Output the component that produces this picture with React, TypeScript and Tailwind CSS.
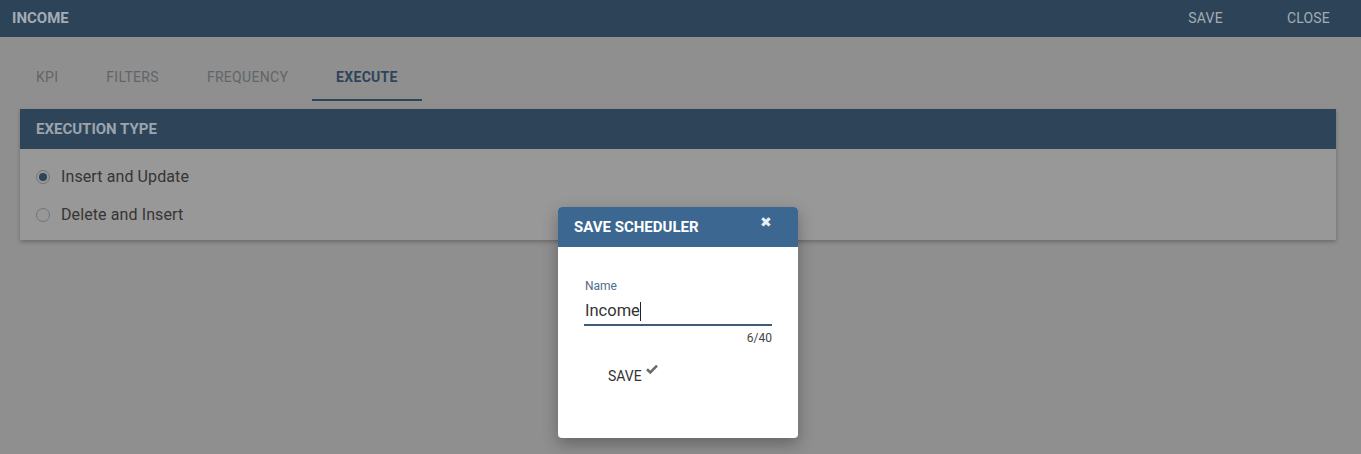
const font = { fontFamily: "Roboto, 'Liberation Sans', sans-serif" };

const tabs = [
  { label: "KPI", active: false },
  { label: "FILTERS", active: false },
  { label: "FREQUENCY", active: false },
  { label: "EXECUTE", active: true },
];

function Radio({ checked, label }: { checked: boolean; label: string }) {
  return (
    <label className="flex items-center h-[38px] gap-[11px]">
      <span className="w-[14px] h-[14px] rounded-full border-[1.5px] border-[#6f757b] flex items-center justify-center">
        {checked && <span className="w-[8px] h-[8px] rounded-full bg-[#2e4459]" />}
      </span>
      <span className="text-[16px] tracking-[0.1px] text-[#353535]">{label}</span>
    </label>
  );
}

export default function App() {
  return (
    <div className="relative w-[1361px] h-[454px] bg-[#8f8f8f] overflow-hidden" style={font}>
      {/* Top bar */}
      <div className="h-[37px] bg-[#2d4458] flex items-center justify-between pl-[12px] pr-[31px]">
        <span className="text-[15px] font-bold text-[#a3acb5]">INCOME</span>
        <div className="flex gap-[64px] text-[14px] tracking-[0.2px] text-[#a3acb5]">
          <span>SAVE</span>
          <span>CLOSE</span>
        </div>
      </div>

      {/* Tabs */}
      <div className="flex pl-[12px] mt-[16px] h-[48px]">
        {tabs.map((t) => (
          <div
            key={t.label}
            className={
              "px-[24px] flex items-center pt-[3px] text-[14px] tracking-[0.3px] " +
              (t.active
                ? "font-bold text-[#2e4459] border-b-2 border-[#2e4459]"
                : "text-[#626568] border-b-2 border-transparent")
            }
          >
            {t.label}
          </div>
        ))}
      </div>

      {/* Execution type card */}
      <div className="ml-[20px] mt-[8px] w-[1316px] bg-[#989898] shadow-[0_2px_4px_rgba(0,0,0,0.25)]">
        <div className="h-[40px] bg-[#2e4459] flex items-center px-[16px]">
          <span className="text-[15px] font-bold text-[#9ba4ad]">EXECUTION TYPE</span>
        </div>
        <div className="px-[16px] pt-[9px] pb-[6px]">
          <Radio checked label="Insert and Update" />
          <Radio checked={false} label="Delete and Insert" />
        </div>
      </div>

      {/* Save scheduler dialog */}
      <div className="absolute left-[558px] top-[207px] w-[240px] h-[231px] bg-white rounded-[4px] overflow-hidden shadow-[0_6px_16px_rgba(0,0,0,0.3)]">
        <div className="h-[40px] bg-[#3b6790] flex items-center justify-between pl-[16px] pr-[26px]">
          <span className="text-[15px] font-bold text-white mt-[1px]">SAVE SCHEDULER</span>
          <span className="text-[14px] text-[#e8eef4] -mt-[10px] leading-none">✖</span>
        </div>
        <div className="pl-[27px] pr-[26px] pt-[33px]">
          <div className="text-[12px] text-[#4d6c8a] leading-none">Name</div>
          <div className="mt-[6px] -ml-px h-[28px] border-b-2 border-[#3e5b77] flex items-center pt-[1px]">
            <span className="text-[16.5px] text-[#333] ml-px">Income</span>
            <span className="w-px h-[19px] bg-[#222]" />
          </div>
          <div className="text-right text-[12px] text-[#444] mt-[6px] leading-none">6/40</div>
          <div className="flex items-start gap-[4px] pl-[23px] mt-[25px]">
            <span className="text-[14px] text-[#333] leading-none">SAVE</span>
            <svg width="12" height="10" viewBox="0 0 12 10" className="-mt-[5px]">
              <path d="M1 5.2 L4.3 8.4 L11 1.6" fill="none" stroke="#6b6b6b" strokeWidth="2.6" strokeLinejoin="miter" />
            </svg>
          </div>
        </div>
      </div>
    </div>
  );
}
